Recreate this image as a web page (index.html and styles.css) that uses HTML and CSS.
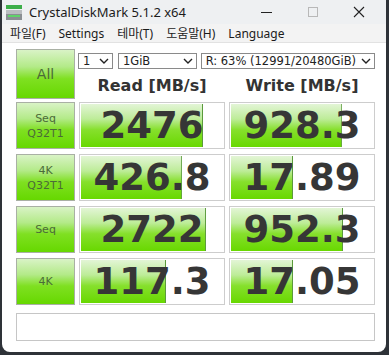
FILE: index.html
```html
<!DOCTYPE html>
<html lang="ko">
<head>
  <meta charset="UTF-8" />
  <title>CrystalDiskMark 5.1.2 x64</title>
  <link rel="stylesheet" href="styles.css">
</head>
<body>

  <div class="window">

    <!-- Title bar -->
    <div class="titlebar">
      <svg class="app-icon" width="16" height="15" viewBox="0 0 16 15">
        <rect x="0" y="0" width="16" height="4" fill="#3dae4a"/>
        <rect x="0" y="5" width="16" height="10" fill="#8a8f93"/>
        <rect x="0" y="5" width="16" height="4" fill="#b9bdc0"/>
        <rect x="2" y="10" width="12" height="2" fill="#5fd36a"/>
      </svg>
      <span class="title">CrystalDiskMark 5.1.2 x64</span>
      <div class="controls">
        <svg width="46" height="24" viewBox="0 0 46 24"><path d="M17 12.5h11" stroke="#222" stroke-width="1"/></svg>
        <svg width="46" height="24" viewBox="0 0 46 24"><rect x="18.5" y="7.5" width="9" height="9" fill="none" stroke="#b8b8b8"/></svg>
        <svg width="46" height="24" viewBox="0 0 46 24"><path d="M18 7l10 10M28 7l-10 10" stroke="#222" stroke-width="1.1"/></svg>
      </div>
    </div>

    <!-- Menu bar -->
    <div class="menubar">
      <span>파일(F)</span>
      <span>Settings</span>
      <span>테마(T)</span>
      <span>도움말(H)</span>
      <span>Language</span>
    </div>

    <div class="main">

      <!-- Test setup and column heads -->
      <div class="top">
        <div class="btn all">All</div>
        <div class="top-right">
          <div class="selects">
            <div class="select s-count"><span>1</span><svg width="10" height="6" viewBox="0 0 10 6"><path d="M1 1l4 4 4-4" fill="none" stroke="#222" stroke-width="1.4"/></svg></div>
            <div class="select s-size"><span>1GiB</span><svg width="10" height="6" viewBox="0 0 10 6"><path d="M1 1l4 4 4-4" fill="none" stroke="#222" stroke-width="1.4"/></svg></div>
            <div class="select s-drive"><span>R: 63% (12991/20480GiB)</span><svg width="10" height="6" viewBox="0 0 10 6"><path d="M1 1l4 4 4-4" fill="none" stroke="#222" stroke-width="1.4"/></svg></div>
          </div>
          <div class="heads">
            <div>Read [MB/s]</div>
            <div>Write [MB/s]</div>
          </div>
        </div>
      </div>

      <!-- Results -->
      <div class="rows">
        <div class="row">
          <div class="btn label">Seq<br>Q32T1</div>
          <div class="value" style="--fill: 86%">2476</div>
          <div class="value" style="--fill: 78%">928.3</div>
        </div>
        <div class="row">
          <div class="btn label">4K<br>Q32T1</div>
          <div class="value" style="--fill: 71%">426.8</div>
          <div class="value" style="--fill: 44%">17.89</div>
        </div>
        <div class="row">
          <div class="btn label">Seq</div>
          <div class="value" style="--fill: 88%">2722</div>
          <div class="value" style="--fill: 79%">952.3</div>
        </div>
        <div class="row">
          <div class="btn label">4K</div>
          <div class="value" style="--fill: 60%">117.3</div>
          <div class="value" style="--fill: 44%">17.05</div>
        </div>
      </div>

      <!-- Comment box -->
      <div class="comment"></div>

    </div>
  </div>

</body>
</html>
```

FILE: styles.css
```css
* { box-sizing: border-box; }

body {
  margin: 0;
  background: #2e3238;
  font-family: "DejaVu Sans", sans-serif;
  color: #333;
}

/* Window frame */
.window {
  width: 384px;
  height: 352px;
  margin-left: 2px;
  background: #fff;
  border-radius: 0 0 8px 8px;
  overflow: hidden;
}

/* Title bar */
.titlebar {
  display: flex;
  align-items: center;
  height: 24px;
  background: #eef0f2;
  font-family: "Noto Sans", sans-serif;
  font-size: 13px;
  color: #1b1b1b;
}

.app-icon {
  margin: 0 7px 0 4px;
}

.title {
  flex: 1;
}

.controls {
  display: flex;
  margin-right: 4px;
}

/* Menu bar */
.menubar {
  display: flex;
  gap: 13px;
  height: 19px;
  padding-left: 8px;
  align-items: center;
  background: #f3f3f3;
  border-bottom: 1px solid #e2e2e2;
  font-family: "Noto Sans", "Noto Sans CJK KR", sans-serif;
  font-size: 12px;
  color: #1b1b1b;
}

.main {
  padding: 6px 0 0 14px;
}

/* Green buttons */
.btn {
  display: flex;
  align-items: center;
  justify-content: center;
  text-align: center;
  border: 1px solid #a9b0a4;
  background: linear-gradient(#d9f3c6 0%, #b3ea88 35%, #7fe021 60%, #66d800 100%);
  color: #4b6b38;
}

.top {
  display: grid;
  grid-template-columns: 59px 296px;
  column-gap: 4px;
  height: 50px;
}

.all {
  font-size: 14px;
}

.top-right {
  display: flex;
  flex-direction: column;
}

.selects {
  display: flex;
  margin: 4px 0 0 -1px;
  height: 16px;
}

.select {
  display: flex;
  align-items: center;
  justify-content: space-between;
  padding: 0 3px 0 4px;
  border: 1px solid #8a8a8a;
  background: #fff;
  font-size: 11.5px;
  color: #222;
  white-space: nowrap;
  overflow: hidden;
}

.select span {
  overflow: hidden;
}

.select svg {
  flex: none;
  margin-left: 2px;
}

.s-count { width: 35px; }
.s-size { width: 79px; margin-left: 5px; }
.s-drive { width: 175px; margin-left: 4px; }

.heads {
  display: grid;
  grid-template-columns: 146px 146px;
  column-gap: 4px;
  margin-top: 7px;
  font-size: 16px;
  font-weight: bold;
  text-align: center;
  color: #333;
}

/* Result rows */
.rows {
  display: flex;
  flex-direction: column;
  gap: 5px;
  margin-top: 3px;
}

.row {
  display: grid;
  grid-template-columns: 59px 146px 146px;
  column-gap: 4px;
  height: 47px;
}

.label {
  font-size: 11px;
  line-height: 15px;
}

.value {
  display: flex;
  align-items: center;
  justify-content: center;
  border: 1px solid #cdcdcd;
  padding: 1px;
  background:
    linear-gradient(to left, #5b9a3c 1px, transparent 1px) no-repeat,
    linear-gradient(#e3f5d6 0%, #bdec98 35%, #86e02c 60%, #68d800 100%) no-repeat;
  background-size: var(--fill) 100%;
  background-origin: content-box;
  background-clip: content-box;
  font-size: 37px;
  font-weight: bold;
  color: #363636;
}

.comment {
  width: 359px;
  height: 28px;
  margin-top: 8px;
  border: 1px solid #c6c6c6;
}
```
